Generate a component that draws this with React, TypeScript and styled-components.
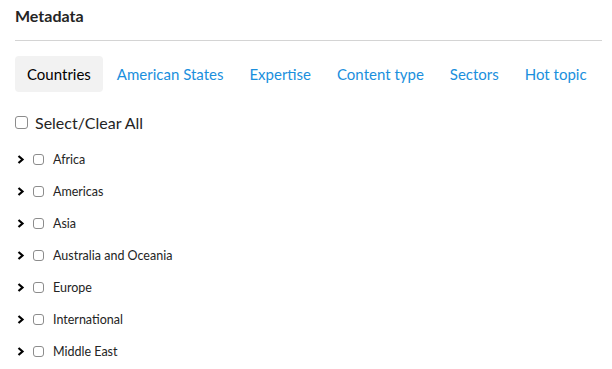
import styled, { createGlobalStyle } from "styled-components";

const GlobalStyle = createGlobalStyle`
  body {
    margin: 0;
    background: #fff;
    font-family: Lato, "Open Sans", sans-serif;
    color: #242424;
  }
`;

const tabs = [
  "Countries",
  "American States",
  "Expertise",
  "Content type",
  "Sectors",
  "Hot topic",
];

const regions = [
  "Africa",
  "Americas",
  "Asia",
  "Australia and Oceania",
  "Europe",
  "International",
  "Middle East",
];

function Chevron() {
  return (
    <svg width="8" height="9" viewBox="0 0 8 9">
      <path
        d="M1.5 1 L5.5 4.5 L1.5 8"
        fill="none"
        stroke="#000"
        strokeWidth="2.2"
        strokeLinejoin="miter"
      />
    </svg>
  );
}

export default function App() {
  return (
    <>
      <GlobalStyle />
      <Panel>
        <Title>Metadata</Title>
        <Divider />

        <TabBar>
          {tabs.map((t, i) => (
            <Tab key={t} $active={i === 0}>
              {t}
            </Tab>
          ))}
        </TabBar>

        <SelectAll>
          <Box $size={13} />
          Select/Clear All
        </SelectAll>

        <List>
          {regions.map((r) => (
            <Row key={r}>
              <Toggle>
                <Chevron />
              </Toggle>
              <Box $size={11} />
              <Label>{r}</Label>
            </Row>
          ))}
        </List>
      </Panel>
    </>
  );
}

const Panel = styled.div`
  padding: 0 10px 0 15px;
`;

const Title = styled.h3`
  margin: 0;
  padding-top: 7px;
  font-size: 16px;
  line-height: 18px;
  font-weight: 700;
  color: #242424;
`;

const Divider = styled.hr`
  margin: 15px 0 0;
  border: none;
  border-top: 1px solid #d4d4d4;
  height: 0;
`;

const TabBar = styled.div`
  display: flex;
  gap: 2px;
  margin-top: 15px;
`;

const Tab = styled.div<{ $active?: boolean }>`
  height: 36px;
  padding: 0 12px;
  display: flex;
  align-items: center;
  border-radius: 4px;
  font-size: 15px;
  background: ${(p) => (p.$active ? "#f2f2f2" : "transparent")};
  color: ${(p) => (p.$active ? "#000" : "#1a8fdd")};
  cursor: pointer;
`;

const Box = styled.span<{ $size: number }>`
  display: inline-block;
  box-sizing: border-box;
  width: ${(p) => p.$size}px;
  height: ${(p) => p.$size}px;
  border: 1px solid #8c8c8c;
  border-radius: 3px;
  background: #fff;
  flex-shrink: 0;
`;

const SelectAll = styled.label`
  display: flex;
  align-items: center;
  gap: 7px;
  margin-top: 21px;
  height: 18px;
  font-size: 16px;
  color: #242424;
`;

const List = styled.div`
  display: flex;
  flex-direction: column;
  margin-top: 12px;
`;

const Row = styled.div`
  display: flex;
  align-items: center;
  height: 32px;
`;

const Toggle = styled.span`
  display: flex;
  box-sizing: border-box;
  width: 18px;
  padding-left: 2px;
`;

const Label = styled.span`
  margin-left: 9px;
  font-size: 12.5px;
  color: #242424;
`;
